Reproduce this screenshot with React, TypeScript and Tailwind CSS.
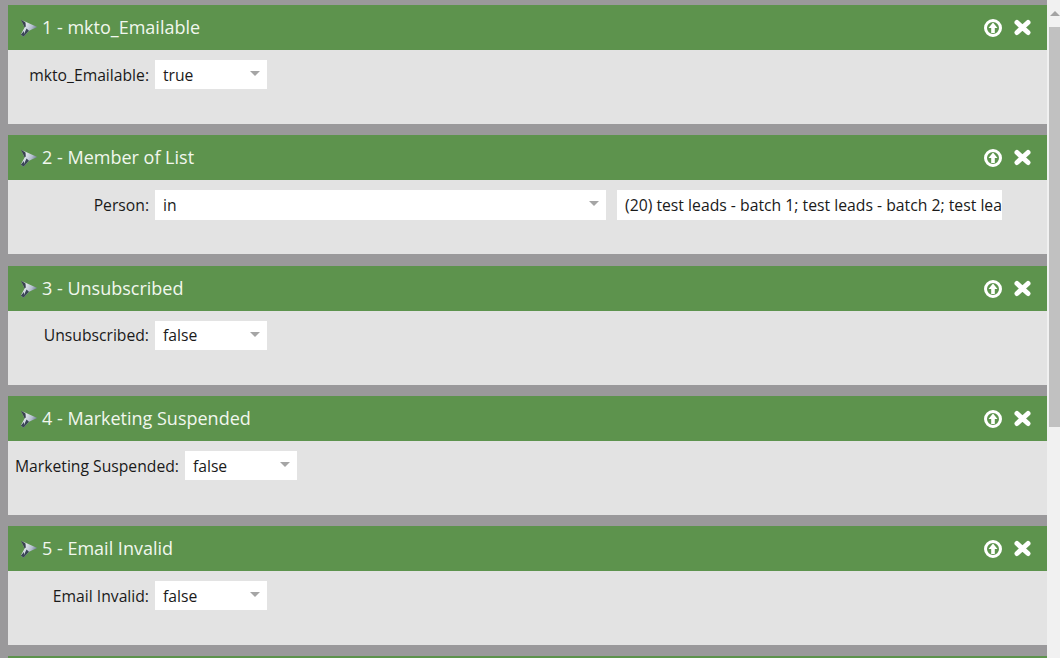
const rules = [
  { title: '1 - mkto_Emailable', label: 'mkto_Emailable:', value: 'true', selectClass: 'w-[112px] h-[29px]', labelPad: 'pt-[2px]', valuePad: 'pt-[2px]' },
  {
    title: '2 - Member of List',
    label: 'Person:',
    value: 'in',
    selectClass: 'w-[451px] h-[30px]',
    labelPad: 'pt-[2px]',
    valuePad: 'pt-px',
    extra: '(20) test leads - batch 1; test leads - batch 2; test leads - batch 3; test leads - batch 4',
  },
  { title: '3 - Unsubscribed', label: 'Unsubscribed:', value: 'false', selectClass: 'w-[112px] h-[29px]', labelPad: 'pt-px', valuePad: 'pt-px' },
  { title: '4 - Marketing Suspended', label: 'Marketing Suspended:', value: 'false', selectClass: 'w-[112px] h-[29px]', labelPad: 'pt-[2px]', valuePad: 'pt-[2px]' },
  { title: '5 - Email Invalid', label: 'Email Invalid:', value: 'false', selectClass: 'w-[112px] h-[29px]', labelPad: 'pt-[2px]', valuePad: 'pt-[2px]' },
];

const FunnelIcon = ({ id }: { id: string }) => (
  <svg width="18" height="18" viewBox="0 0 18 18" className="shrink-0">
    <defs>
      <linearGradient id={id} x1="0" y1="0" x2="1" y2="0.5">
        <stop offset="0" stopColor="#7d8894" />
        <stop offset="0.3" stopColor="#e6ebf0" />
        <stop offset="0.7" stopColor="#b4bfce" />
        <stop offset="1" stopColor="#66728a" />
      </linearGradient>
    </defs>
    <path d="M1 0.8 L17.3 8 L9 11.7 L3.5 17.8 L0.8 15.5 L4.6 8.5 Z" fill={`url(#${id})`} />
    <path d="M1 0.8 L5.5 3.5 L5.8 7.5 L4.6 8.5 Z" fill="#38424e" />
    <path d="M6.5 9.5 L9 11.7 L3.5 17.8 L0.8 15.5 L4 12 L4 15 Z" fill="#3a4656" />
  </svg>
);

const UpIcon = () => (
  <svg width="18" height="18" viewBox="0 0 18 18">
    <circle cx="9" cy="9" r="7.5" fill="none" stroke="#fff" strokeWidth="3" />
    <path d="M9 3.6 L13.5 9 L10.8 9 L10.8 14 L7.2 14 L7.2 9 L4.5 9 Z" fill="#fff" />
  </svg>
);

const CloseIcon = () => (
  <svg width="17" height="17" viewBox="0 0 17 17">
    <path d="M3 3.5 L14 13.5 M14 3.5 L3 13.5" stroke="#fff" strokeWidth="5" strokeLinecap="round" />
  </svg>
);

const Select = ({ value, className, valuePad }: { value: string; className: string; valuePad: string }) => (
  <div className={`${className} bg-white flex items-center justify-between pl-2 pr-[7px] shrink-0`}>
    <span className={`text-[#1a1a1a] ${valuePad}`}>{value}</span>
    <span className="w-0 h-0 border-x-[5px] border-x-transparent border-t-[5px] border-t-[#a5a5a5] mb-[3px]" />
  </div>
);

const RuleCard = ({ rule, index }: { rule: (typeof rules)[number]; index: number }) => (
  <div className={index === 1 ? 'mb-px' : ''}>
    <div className="h-[45px] bg-[#5d934d] flex items-center pl-[12px] pr-4 text-white">
      <FunnelIcon id={`funnel-${index}`} />
      <span className="ml-[4px] text-[18px] text-[#f1f7ee]">{rule.title}</span>
      <div className="ml-auto flex items-center gap-[12px]">
        <UpIcon />
        <CloseIcon />
      </div>
    </div>
    <div className="h-[74px] bg-[#e3e3e3] pt-[10px] pl-[7px] flex items-start text-[15.7px]">
      <div className={`min-w-[134px] h-[29px] flex items-center justify-end text-[#1a1a1a] mr-[6px] ${rule.labelPad}`}>{rule.label}</div>
      <Select value={rule.value} className={rule.selectClass} valuePad={rule.valuePad} />
      {rule.extra && (
        <div className="ml-[11px] w-[385px] h-[30px] bg-white pl-2 pt-px flex items-center overflow-hidden whitespace-nowrap text-[15.75px] text-[#1a1a1a]">
          {rule.extra}
        </div>
      )}
    </div>
  </div>
);

export default function App() {
  return (
    <div className="w-[1060px] h-[658px] overflow-hidden flex bg-[#9a999b] font-['Open_Sans',sans-serif]">
      <div className="w-[1047px] pl-2 pt-[5px] flex flex-col gap-[11px] shrink-0">
        {rules.map((rule, i) => (
          <RuleCard key={rule.title} rule={rule} index={i} />
        ))}
        <div className="h-[45px] bg-[#5d934d] shrink-0" />
      </div>
      <div className="flex-1 bg-[#f1f1f1] pl-[2px] flex flex-col">
        <div className="h-[27px] flex items-center justify-center shrink-0">
          <span className="w-0 h-0 border-x-[5px] border-x-transparent border-b-[5px] border-b-[#a3a3a3]" />
        </div>
        <div className="h-[400px] bg-[#c1c1c1]" />
      </div>
    </div>
  );
}
